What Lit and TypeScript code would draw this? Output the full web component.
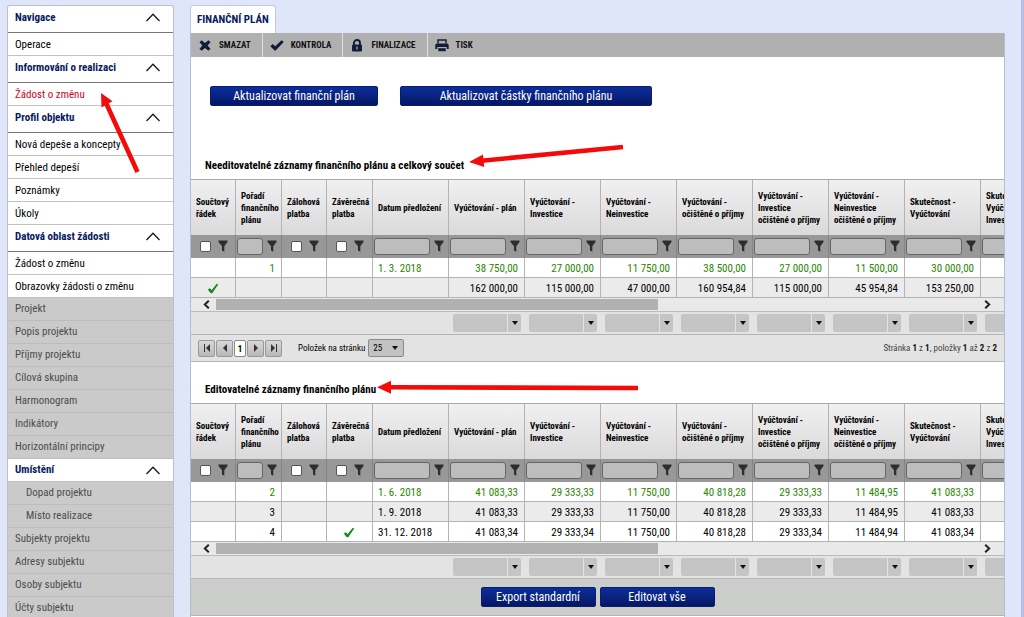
import { LitElement, html, css, svg, nothing } from "lit";
import { customElement, property } from "lit/decorators.js";
import { classMap } from "lit/directives/class-map.js";

interface Column {
  label: string;
  width: number;
  kind: "check" | "number" | "date" | "amount";
}

interface Row {
  cells: string[];
  saved?: boolean;
}

const COLUMNS: Column[] = [
  { label: "Součtový řádek", width: 45, kind: "check" },
  { label: "Pořadí finančního plánu", width: 46, kind: "number" },
  { label: "Zálohová platba", width: 45, kind: "check" },
  { label: "Závěrečná platba", width: 46, kind: "check" },
  { label: "Datum předložení", width: 76, kind: "date" },
  { label: "Vyúčtování - plán", width: 76, kind: "amount" },
  { label: "Vyúčtování -\nInvestice", width: 76, kind: "amount" },
  { label: "Vyúčtování -\nNeinvestice", width: 76, kind: "amount" },
  { label: "Vyúčtování -\nočištěné o příjmy", width: 76, kind: "amount" },
  { label: "Vyúčtování -\nInvestice\nočištěné o příjmy", width: 76, kind: "amount" },
  { label: "Vyúčtování -\nNeinvestice\nočištěné o příjmy", width: 76, kind: "amount" },
  { label: "Skutečnost -\nVyúčtování", width: 76, kind: "amount" },
  { label: "Skutečnost -\nVyúčtování\nInvestice", width: 76, kind: "amount" },
];

const LOCKED_ROWS: Row[] = [
  { saved: true, cells: ["", "1", "", "", "1. 3. 2018", "38 750,00", "27 000,00", "11 750,00", "38 500,00", "27 000,00", "11 500,00", "30 000,00", ""] },
  { cells: ["x", "", "", "", "", "162 000,00", "115 000,00", "47 000,00", "160 954,84", "115 000,00", "45 954,84", "153 250,00", ""] },
];

const EDITABLE_ROWS: Row[] = [
  { saved: true, cells: ["", "2", "", "", "1. 6. 2018", "41 083,33", "29 333,33", "11 750,00", "40 818,28", "29 333,33", "11 484,95", "41 083,33", ""] },
  { cells: ["", "3", "", "", "1. 9. 2018", "41 083,33", "29 333,33", "11 750,00", "40 818,28", "29 333,33", "11 484,95", "41 083,33", ""] },
  { cells: ["", "4", "", "x", "31. 12. 2018", "41 083,34", "29 333,34", "11 750,00", "40 818,28", "29 333,34", "11 484,94", "41 083,34", ""] },
];

const base = css`
  * { box-sizing: border-box; }
  button, input, select { font: inherit; color: inherit; margin: 0; padding: 0; border: 0; border-radius: 0; background: none; }
  svg { display: block; }
  a { color: inherit; text-decoration: none; }
`;

const funnel = html`<svg width="10" height="13" viewBox="0 0 10 13"><path d="M.5.5h9v1.600L6.300 6.200v5.600L4 10.400V6.200L.5 2.100z" fill="#2e2e2e"/></svg>`;
const tick = html`<svg width="12" height="11" viewBox="0 0 12 11"><path d="M.8 6.600 3 5.300l1.600 2L9.800.8l1.400.6L5.200 10.200H3.800z" fill="#14861c"/></svg>`;

@customElement("plan-grid")
export class PlanGrid extends LitElement {
  @property({ attribute: false }) rows: Row[] = [];
  @property() caption = "";

  static styles = [base, css`
    :host { display: block; border-top: 1px solid #a9a9a9; overflow: hidden; }
    .view { overflow: hidden; }
    table { table-layout: fixed; border-collapse: separate; border-spacing: 0; width: 866px; }
    th, td { border-right: 1px solid #b3b3b3; padding: 0 6px 0 5px; text-align: left; }
    .head th { height: 55px; padding: 0 0 0 5px; background: linear-gradient(#f0f0f0, #dadada); font-size: 9px; line-height: 12px; font-weight: 700; color: #000; white-space: pre-line; vertical-align: middle; }
    .filters td { height: 23px; padding: 0 4px 0 1px; background: #989898; border-right-color: #868686; }
    .filter { display: flex; align-items: center; gap: 4px; }
    .filter.pick { padding-left: 8px; gap: 7px; }
    .filter button { width: 10px; height: 13px; flex: none; }
    .filter .value { flex: 1; min-width: 0; height: 17px; border: 1px solid #666; border-radius: 3px; background: #bdbdbd; }
    .filter .flag { appearance: none; width: 11px; height: 11px; flex: none; border: 1px solid #555; border-radius: 2px; background: #fff; }
    .row td { height: 20px; padding-top: 2px; border-bottom: 1px solid #b3b3b3; font-size: 11px; line-height: 16px; color: #000; background: #fff; white-space: nowrap; }
    .row.alt td { background: #ebebeb; }
    .row.saved td { color: #2a8500; }
    .row td.right { text-align: right; }
    .row td svg { margin: 0 auto; }
    .scroll { display: flex; height: 13px; background: #e9e9e9; align-items: center; padding-right: 10px; }
    .scroll button { width: 25px; height: 13px; display: grid; place-items: center; padding-left: 6px; }
    .scroll .thumb { width: 55%; height: 11px; background: #b1b1b1; }
    .scroll .next { margin-left: auto; width: 14px; padding: 0; }
    .totals { display: flex; gap: 8px; height: 24px; padding: 2px 0 0 262px; background: #e3e3e3; border-top: 1px solid #bbb; border-bottom: 1px solid #b5b5b5; overflow: hidden; }
    .combo { display: grid; grid-template-columns: 54px 13px; gap: 1px; width: 68px; height: 18px; flex: none; }
    .combo select { appearance: none; grid-area: 1 / 1 / 2 / 3; width: 68px; height: 18px; border-radius: 2px; background: linear-gradient(90deg, #c5c5c5 54px, #e3e3e3 54px 55px, #c5c5c5 55px); }
    .combo svg { grid-area: 1 / 2; place-self: center; pointer-events: none; }
  `];

  private filter(c: Column) {
    return html`<td>
      <div class=${classMap({ filter: true, pick: c.kind === "check" })}>
        ${c.kind === "check"
          ? html`<input class="flag" type="checkbox" aria-label=${c.label}>`
          : html`<input class="value" type="text" aria-label=${c.label}>`}
        <button aria-label="Filtr">${funnel}</button>
      </div>
    </td>`;
  }

  private cell(value: string, c: Column) {
    const right = c.kind === "number" || c.kind === "amount";
    return html`<td class=${right ? "right" : ""}>${value === "x" ? tick : value || nothing}</td>`;
  }

  render() {
    return html`
      <div class="view">
        <table aria-label=${this.caption}>
          <colgroup>${COLUMNS.map((c) => html`<col style="width:${c.width}px">`)}</colgroup>
          <thead>
            <tr class="head">${COLUMNS.map((c) => html`<th scope="col">${c.label}</th>`)}</tr>
            <tr class="filters">${COLUMNS.map((c) => this.filter(c))}</tr>
          </thead>
          <tbody>
            ${this.rows.map((r, i) => html`
              <tr class=${classMap({ row: true, alt: i % 2 === 1, saved: !!r.saved })}>
                ${r.cells.map((v, j) => this.cell(v, COLUMNS[j]))}
              </tr>`)}
          </tbody>
        </table>
      </div>
      <div class="scroll">
        <button aria-label="Posunout vlevo"><svg width="7" height="9" viewBox="0 0 7 9"><path d="M5.800.7 1.800 4.500l4 3.800" fill="none" stroke="#222" stroke-width="2"/></svg></button>
        <div class="thumb"></div>
        <button class="next" aria-label="Posunout vpravo"><svg width="7" height="9" viewBox="0 0 7 9"><path d="m1.200.7 4 3.800-4 3.800" fill="none" stroke="#222" stroke-width="2"/></svg></button>
      </div>
      <div class="totals">
        ${COLUMNS.filter((c) => c.kind === "amount").map((c) => html`
          <div class="combo">
            <select aria-label=${c.label}><option></option></select>
            <svg width="6" height="4" viewBox="0 0 6 4"><path d="M0 0h6L3 4z" fill="#111"/></svg>
          </div>`)}
      </div>`;
  }
}

interface NavItem {
  label: string;
  look: "head" | "open" | "link" | "off" | "sub";
  current?: boolean;
}

const NAV: NavItem[] = [
  { label: "Navigace", look: "head" },
  { label: "Operace", look: "link" },
  { label: "Informování o realizaci", look: "head" },
  { label: "Žádost o změnu", look: "link", current: true },
  { label: "Profil objektu", look: "head" },
  { label: "Nová depeše a koncepty", look: "link" },
  { label: "Přehled depeší", look: "link" },
  { label: "Poznámky", look: "link" },
  { label: "Úkoly", look: "link" },
  { label: "Datová oblast žádosti", look: "head" },
  { label: "Žádost o změnu", look: "link" },
  { label: "Obrazovky žádosti o změnu", look: "link" },
  { label: "Projekt", look: "off" },
  { label: "Popis projektu", look: "off" },
  { label: "Příjmy projektu", look: "off" },
  { label: "Cílová skupina", look: "off" },
  { label: "Harmonogram", look: "off" },
  { label: "Indikátory", look: "off" },
  { label: "Horizontální principy", look: "off" },
  { label: "Umístění", look: "open" },
  { label: "Dopad projektu", look: "sub" },
  { label: "Místo realizace", look: "sub" },
  { label: "Subjekty projektu", look: "off" },
  { label: "Adresy subjektu", look: "off" },
  { label: "Osoby subjektu", look: "off" },
  { label: "Účty subjektu", look: "off" },
];

@customElement("side-nav")
export class SideNav extends LitElement {
  static styles = [base, css`
    :host { display: block; background: #cacaca; border: 1px solid #bcc0cc; border-bottom: 0; border-radius: 3px 3px 0 0; overflow: hidden; font-size: 11px; line-height: 16px; }
    .item { display: flex; align-items: center; justify-content: space-between; width: 100%; height: 23px; padding: 0 12px 0 7px; border-bottom: 1px solid #c3c3c3; background: #fff; color: #000; text-align: left; white-space: nowrap; }
    .link { padding-top: 2px; }
    .head { height: 27px; padding-bottom: 3px; border-bottom-color: #777; color: #07195f; font-weight: 700; }
    .open { color: #07195f; font-weight: 700; }
    .off, .sub { background: #cacaca; border-bottom-color: #bdbdbd; color: #4c4c4c; }
    .sub { padding-left: 18px; }
    .current { color: #d0021b; }
  `];

  render() {
    return html`<nav>${NAV.map((n) =>
      n.look === "head" || n.look === "open"
        ? html`<button class="item ${n.look}" aria-expanded="true">${n.label}
            <svg width="16" height="9" viewBox="0 0 16 9"><path d="M1.500 8 8 1.200 14.500 8" fill="none" stroke="#1a1a1a" stroke-width="1.300"/></svg></button>`
        : html`<a class=${classMap({ item: true, [n.look]: true, current: !!n.current })} href="#">${n.label}</a>`)}</nav>`;
  }
}

const ICONS = {
  remove: svg`<path d="M1.500 3.300 3.600 1.200 7 3.900l3.400-2.700 2.100 2.100L9.600 6.500l2.900 3.300-2.100 2L7 9.100l-3.400 2.700-2.100-2L4.400 6.500z" fill="#101c38"/>`,
  check: svg`<path d="M.3 7.200 2.700 4.900l2.500 2.300L11.600 1.200l2.200 1.900-8.200 8.500H4.600z" fill="#101c38"/>`,
  lock: svg`<path d="M4 6V4a3 3 0 0 1 6 0v2" fill="none" stroke="#101c38" stroke-width="1.900"/><rect x="2" y="5.500" width="10" height="7" rx="1" fill="#101c38"/><path d="M6.400 7.500h1.200v3H6.400z" fill="#b0b0b0"/>`,
  print: svg`<path d="M3 4.500V1h8v3.500" fill="none" stroke="#101c38" stroke-width="1.400"/><path d="M1.500 4.500h11l1.200 1.200V10h-2V8H2.300v2h-2V5.700z" fill="#101c38"/><path d="M3.300 9.200h7.400v3H3.300z" fill="#101c38"/>`,
};

const ACTIONS = [
  { label: "SMAZAT", icon: ICONS.remove },
  { label: "KONTROLA", icon: ICONS.check },
  { label: "FINALIZACE", icon: ICONS.lock },
  { label: "TISK", icon: ICONS.print },
];

@customElement("app-root")
export class AppRoot extends LitElement {
  static styles = [base, css`
    :host { display: block; position: relative; height: 100vh; overflow: hidden; background: #e0e6fa; font-family: "Roboto Condensed", "Liberation Sans Narrow", Roboto, sans-serif; font-size: 11px; line-height: 16px; color: #000; }
    .page { display: grid; grid-template-columns: 167px minmax(0, 1fr); gap: 16px; height: 100%; padding: 5px 16px 0 7px; border-right: 3px solid #b6bfe4; }
    main { min-width: 0; display: flex; flex-direction: column; }
    .tab { align-self: flex-start; height: 28px; padding: 0 6px; border: 1px solid #c2c8dc; border-bottom: 0; border-radius: 3px 3px 0 0; background: #fff; color: #07195f; font-weight: 700; white-space: nowrap; }
    .sheet { flex: 1; background: #fff; border: 1px solid #b9bdca; border-width: 0 1px; }
    .bar { display: flex; height: 24px; background: #b0b0b0; }
    .bar button { display: flex; align-items: center; gap: 7px; padding: 0 11px 0 7px; border-right: 1px solid #dedede; font-size: 9px; font-weight: 700; color: #111; }
    .bar button:last-child { border-right: 0; }
    .updates { display: flex; gap: 22px; padding: 29px 19px 0; }
    .blue { height: 20px; border-radius: 2px; border: 1px solid #0a1c72; background: linear-gradient(#0c2f9c, #051763); color: #fff; font-size: 12px; line-height: 16px; white-space: nowrap; }
    .blue.plan { width: 168px; }
    .blue.sums { width: 252px; }
    .blue.small { width: 115px; }
    h2 { margin: 0; padding-left: 14px; font-size: 11px; line-height: 16px; font-weight: 700; }
    .first { padding-top: 52px; padding-bottom: 5px; }
    .second { padding-top: 20px; padding-bottom: 5px; }
    .pager { display: flex; align-items: center; height: 27px; padding: 0 7px; background: #e3e3e3; border-bottom: 1px solid #b5b5b5; font-size: 9px; }
    .step { display: grid; place-items: center; width: 17px; height: 17px; border: 1px solid #999; border-radius: 2px; background: linear-gradient(#d8d8d8, #b9b9b9); }
    .steps { display: flex; gap: 1px; align-items: center; }
    .page-no { display: grid; place-items: center; width: 12px; height: 17px; border: 1px solid #888; border-radius: 2px; background: #fff; font-weight: 700; }
    .size { display: flex; align-items: center; gap: 3px; margin-left: 16px; }
    .pick { display: grid; grid-template-columns: 18px 18px; }
    .pick select { appearance: none; grid-area: 1 / 1 / 2 / 3; width: 36px; height: 18px; padding-left: 4px; border: 1px solid #8b8b8b; border-radius: 2px; background: #c2c2c2; }
    .pick svg { grid-area: 1 / 2; place-self: center; pointer-events: none; }
    .info { margin-left: auto; color: #444; }
    .info b { color: #111; font-weight: 700; }
    .foot { display: flex; justify-content: center; gap: 4px; padding: 8px 0; background: #cbcdca; border-bottom: 1px solid #b5b5b5; }
    .marks { position: absolute; top: 0; left: 0; pointer-events: none; }
  `];

  render() {
    return html`
      <div class="page">
        <side-nav></side-nav>
        <main>
          <button class="tab">FINANČNÍ PLÁN</button>
          <div class="sheet">
            <div class="bar">
              ${ACTIONS.map((a) => html`<button><svg width="14" height="13" viewBox="0 0 14 13">${a.icon}</svg>${a.label}</button>`)}
            </div>
            <div class="updates">
              <button class="blue plan">Aktualizovat finanční plán</button>
              <button class="blue sums">Aktualizovat částky finančního plánu</button>
            </div>
            <h2 class="first">Needitovatelné záznamy finančního plánu a celkový součet</h2>
            <plan-grid .rows=${LOCKED_ROWS} caption="Needitovatelné záznamy"></plan-grid>
            <div class="pager">
              <div class="steps">
                <button class="step" aria-label="První"><svg width="8" height="8" viewBox="0 0 8 8"><path d="M1 0h1v8H1zM7 0v8L3 4z" fill="#333"/></svg></button>
                <button class="step" aria-label="Předchozí"><svg width="8" height="8" viewBox="0 0 8 8"><path d="M6 0v8L2 4z" fill="#333"/></svg></button>
                <button class="page-no">1</button>
                <button class="step" aria-label="Další"><svg width="8" height="8" viewBox="0 0 8 8"><path d="M2 0v8l4-4z" fill="#333"/></svg></button>
                <button class="step" aria-label="Poslední"><svg width="8" height="8" viewBox="0 0 8 8"><path d="M6 0h1v8H6zM1 0v8l4-4z" fill="#333"/></svg></button>
              </div>
              <div class="size">
                <label for="size">Položek na stránku</label>
                <div class="pick">
                  <select id="size"><option>25</option></select>
                  <svg width="6" height="4" viewBox="0 0 6 4"><path d="M0 0h6L3 4z" fill="#111"/></svg>
                </div>
              </div>
              <div class="info">Stránka <b>1</b> z <b>1</b>, položky <b>1</b> až <b>2</b> z <b>2</b></div>
            </div>
            <h2 class="second">Editovatelné záznamy finančního plánu</h2>
            <plan-grid .rows=${EDITABLE_ROWS} caption="Editovatelné záznamy"></plan-grid>
            <div class="foot">
              <button class="blue small">Export standardní</button>
              <button class="blue small">Editovat vše</button>
            </div>
          </div>
        </main>
      </div>
      <svg class="marks" width="700" height="420" viewBox="0 0 700 420" aria-hidden="true">
        <g stroke="#f50a0a" stroke-width="4.600"><path d="m137.500 172-31-68M623 147l-144 14M638 388l-248-.8"/></g>
        <path d="m101 93 11.500 8.200-11 6.200zM469 162l14-7.500 1.200 12.500zM377 387.200l14-6.500v13z" fill="#f50a0a"/>
      </svg>`;
  }
}
